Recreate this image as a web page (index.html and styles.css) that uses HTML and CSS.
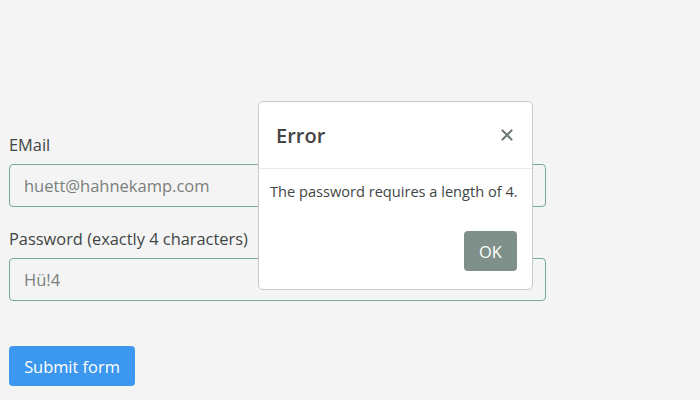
FILE: index.html
```html
<!DOCTYPE html>
<html>
<head>
<meta charset="utf-8">
<link rel="stylesheet" href="styles.css">
</head>
<body>
<form class="form">
  <div class="field">
    <label class="label">EMail</label>
    <div class="input">huett@hahnekamp.com</div>
  </div>
  <div class="field">
    <label class="label">Password (exactly 4 characters)</label>
    <div class="input">Hü!4</div>
  </div>
  <button type="button" class="submit">Submit form</button>
</form>
<div class="modal">
  <div class="modal-header">
    <span class="modal-title">Error</span>
    <svg class="close" width="12" height="12" viewBox="0 0 12 12"><path d="M1.5 1.5L10.5 10.5M10.5 1.5L1.5 10.5" stroke="#6f7c77" stroke-width="2.2" stroke-linecap="round"/></svg>
  </div>
  <div class="modal-body">The password requires a length of 4.</div>
  <div class="modal-footer">
    <button type="button" class="ok">OK</button>
  </div>
</div>
</body>
</html>
```

FILE: styles.css
```css
html, body {
  margin: 0;
  background: #f4f4f4;
  font-family: "Open Sans", "Noto Sans", sans-serif;
  color: #3f4644;
}
.form {
  padding: 133px 0 0 9px;
  width: 537px;
  display: flex;
  flex-direction: column;
}
.field {
  display: flex;
  flex-direction: column;
  gap: 7px;
  margin-bottom: 20px;
}
.label {
  font-size: 16.4px;
  line-height: 24px;
}
.input {
  box-sizing: border-box;
  height: 43px;
  border: 1px solid #74ab90;
  border-radius: 4px;
  padding: 0 14px;
  display: flex;
  align-items: center;
  font-size: 16.5px;
  color: #7a7f7d;
}
.submit {
  margin-top: 25px;
  align-self: flex-start;
  height: 40px;
  width: 126px;
  border: none;
  border-radius: 4px;
  background: #3c97ef;
  color: #fff;
  font-family: inherit;
  font-size: 16.4px;
  padding: 0;
}
.modal {
  position: absolute;
  left: 258px;
  top: 101px;
  width: 275px;
  height: 189px;
  box-sizing: border-box;
  background: #fff;
  border: 1px solid #c8c8c8;
  border-radius: 5px;
  display: flex;
  flex-direction: column;
}
.modal-header {
  height: 66px;
  border-bottom: 1px solid #e4efea;
  display: flex;
  align-items: center;
  justify-content: space-between;
  padding: 0 19px 0 17px;
}
.modal-title {
  font-size: 20px;
  font-weight: 600;
  color: #444;
}
.modal-body {
  padding: 12px 11px 0;
  font-size: 14.6px;
  line-height: 20px;
  color: #3f4644;
}
.modal-footer {
  flex: 1;
  display: flex;
  justify-content: flex-end;
  align-items: flex-end;
  padding: 0 15px 18px;
}
.ok {
  width: 53px;
  height: 40px;
  border: none;
  border-radius: 4px;
  background: #7f8f89;
  color: #fff;
  font-family: inherit;
  font-size: 16.4px;
  padding: 0;
}
```
